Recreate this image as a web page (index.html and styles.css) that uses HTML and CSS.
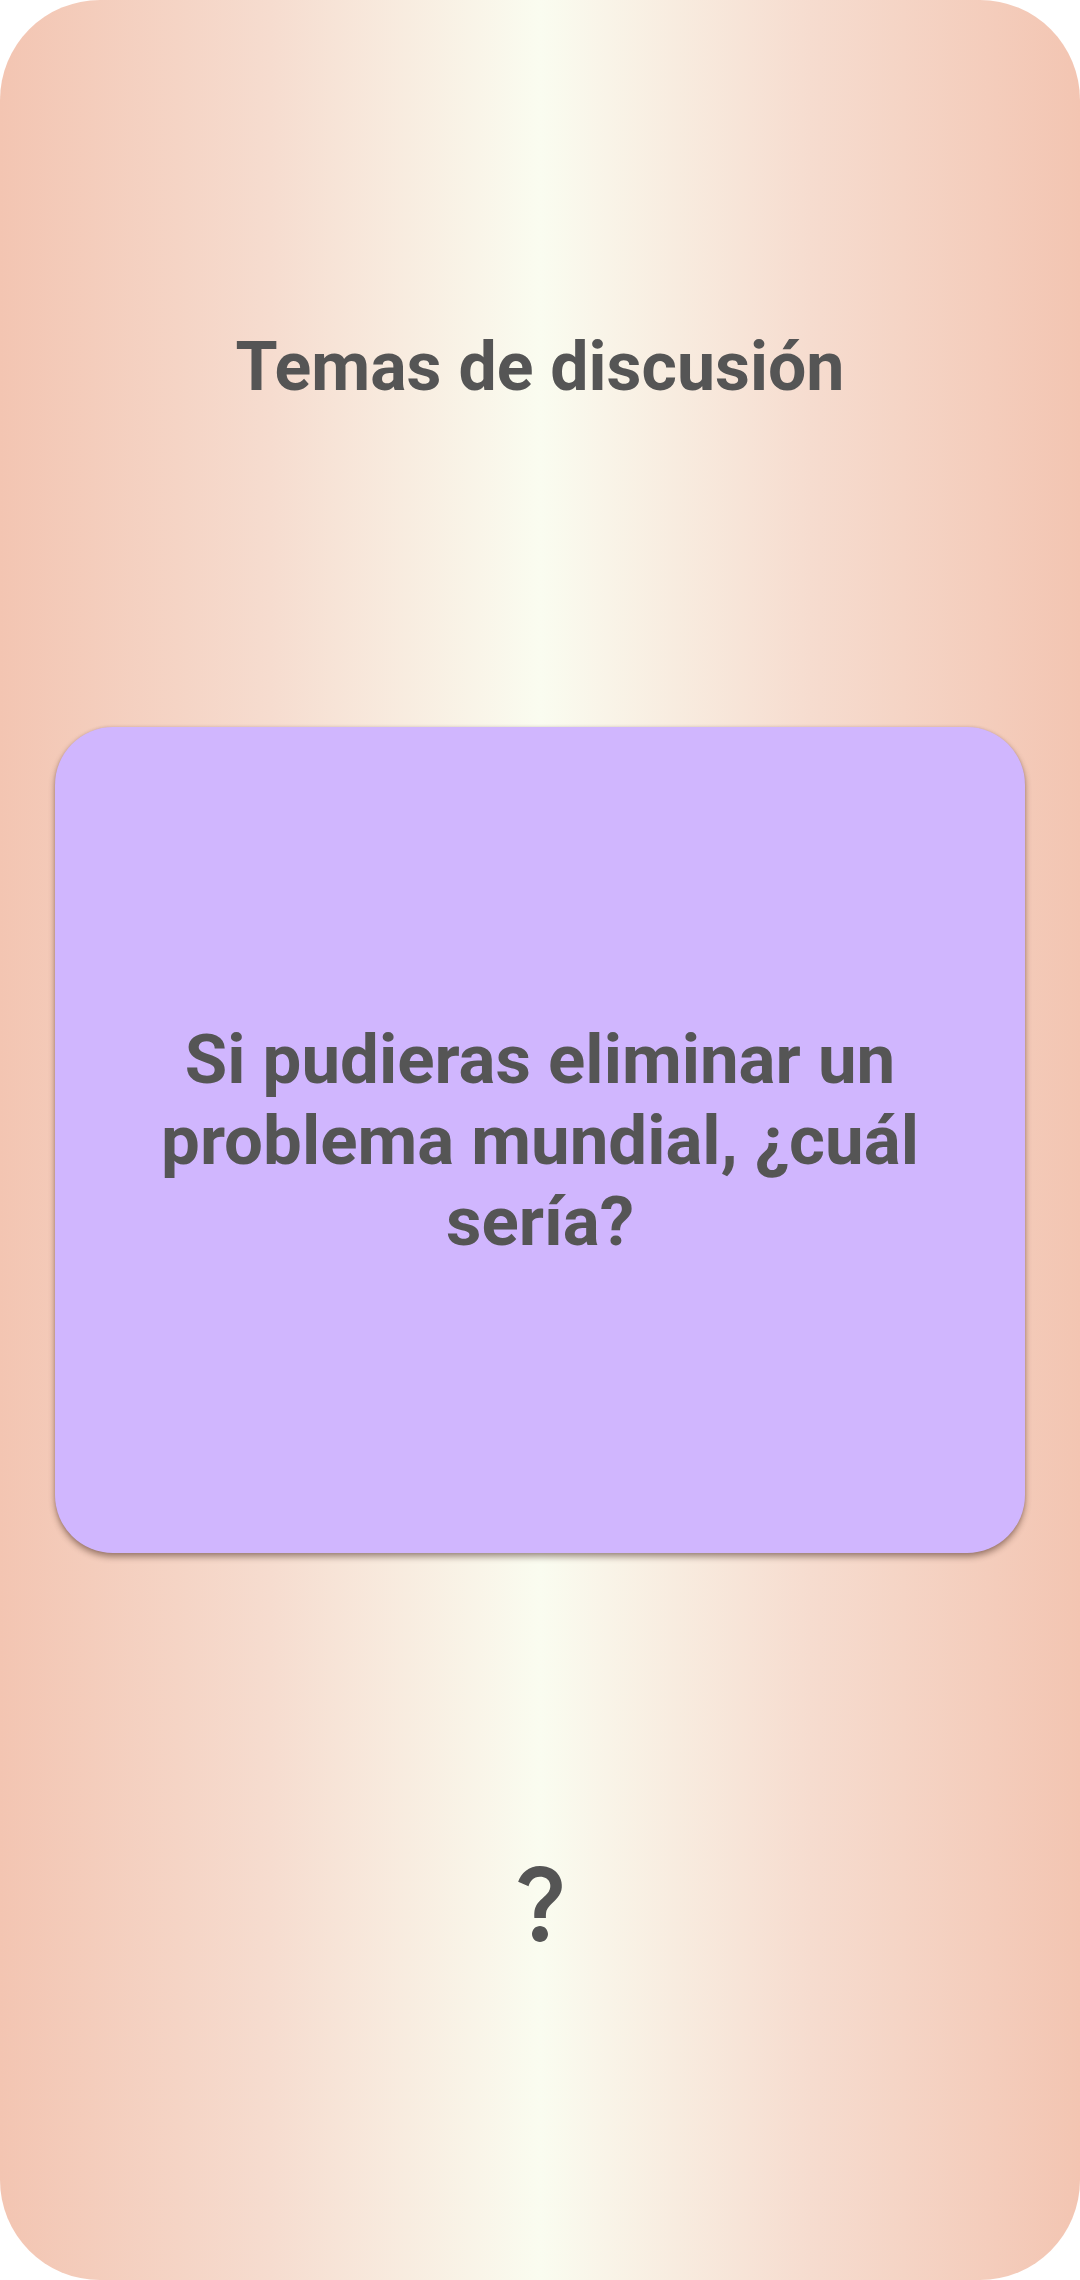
FILE: index.html
```html
<!DOCTYPE html>
<html lang="es">
<head>
<meta charset="utf-8">
<link rel="stylesheet" href="styles.css">
<title>Temas de discusión</title>
</head>
<body>
<div class="screen">
  <h1 class="title">Temas de discusión</h1>
  <div class="card">
    <p class="question">Si pudieras eliminar un problema mundial, ¿cuál sería?</p>
  </div>
  <div class="help">
    <svg viewBox="0 0 24 24" width="96" height="96" aria-hidden="true">
      <path fill="#555555" d="M11.07 12.85c.77-1.39 2.25-2.210 3.11-3.44.91-1.29.4-3.7-2.18-3.7-1.69 0-2.52 1.28-2.87 2.34L6.54 6.96C7.25 4.83 9.18 3 11.99 3c2.35 0 3.96 1.07 4.78 2.41.7 1.15 1.11 3.3.03 4.9-1.2 1.77-2.35 2.31-2.97 3.45-.25.46-.35.76-.35 2.24h-2.89c-.01-.78-.13-2.05.48-3.15zM14 20c0 1.1-.9 2-2 2s-2-.9-2-2 .9-2 2-2 2 .9 2 2z"/>
    </svg>
  </div>
</div>
</body>
</html>
```
FILE: styles.css
```css
html, body {
  margin: 0;
  padding: 0;
  background: #ffffff;
}

.screen {
  width: 1080px;
  height: 2280px;
  box-sizing: border-box;
  border-radius: 100px;
  background: linear-gradient(to right, #f3c5b2 0%, #f6dccf 25%, #fafcf0 50%, #f6dccf 75%, #f3c5b2 100%);
  display: flex;
  flex-direction: column;
  align-items: center;
  padding-top: 327px;
  font-family: Roboto, "Liberation Sans", sans-serif;
  color: #555555;
}

.title {
  margin: 0;
  font-size: 68px;
  line-height: 81px;
  font-weight: 700;
  text-align: center;
}

.card {
  margin-top: 319px;
  width: 970px;
  height: 826px;
  box-sizing: border-box;
  background: #d0b6fe;
  border-radius: 58px;
  box-shadow: 0 4px 6px rgba(60, 30, 20, 0.45), 0 0 3px rgba(60, 30, 20, 0.15);
  display: flex;
  align-items: center;
  justify-content: center;
  padding: 0 100px;
}

.question {
  margin: 0;
  font-size: 69px;
  line-height: 81px;
  font-weight: 700;
  text-align: center;
}

.help {
  margin-top: 301px;
  width: 96px;
  height: 96px;
}

.help svg {
  display: block;
}
```
